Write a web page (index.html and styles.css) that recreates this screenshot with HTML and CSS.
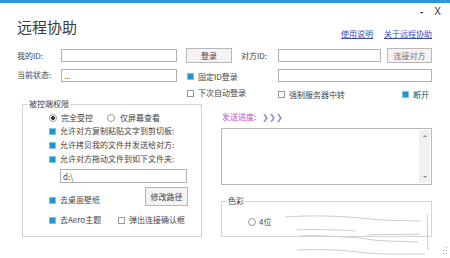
FILE: index.html
```html
<!DOCTYPE html>
<html lang="zh-CN">
<head>
    <meta charset="UTF-8">
    <meta name="viewport" content="width=device-width, initial-scale=1.0">
    <title>远程协助</title>
    <link rel="stylesheet" href="styles.css">
</head>
<body>
    <div class="window">
        <div class="topbar"></div>

        <div class="header">
            <h1 class="title">远程协助</h1>
            <div class="header-right">
                <div class="controls"><span class="min">-</span><span class="close">X</span></div>
                <div class="links">
                    <a href="#">使用说明</a>
                    <a href="#">关于远程协助</a>
                </div>
            </div>
        </div>

        <!-- fila de IDs -->
        <div class="row row1">
            <label class="lbl" for="miId">我的ID:</label>
            <input class="field f-my" type="text" id="miId">
            <button class="btn btn-login">登录</button>
            <label class="lbl lbl-peer" for="peerId">对方ID:</label>
            <input class="field f-peer" type="text" id="peerId">
            <button class="btn btn-connect">连接对方</button>
        </div>

        <div class="row row2">
            <label class="lbl" for="estado">当前状态:</label>
            <input class="field f-my" type="text" id="estado" value="...">
            <div class="item item-fixed"><span class="check on"></span><span>固定ID登录</span></div>
            <input class="field f-wide" type="text">
        </div>

        <div class="row row3">
            <div class="item w-auto"><span class="check"></span><span>下次自动登录</span></div>
            <div class="item w-relay"><span class="check"></span><span>强制服务器中转</span></div>
            <div class="item"><span class="check on"></span><span>断开</span></div>
        </div>

        <div class="main">
            <fieldset class="group perm">
                <legend>被控端权限</legend>
                <div class="inner">
                    <div class="radios">
                        <div class="item"><span class="radio on"></span><span>完全受控</span></div>
                        <div class="item radio-2"><span class="radio"></span><span>仅屏幕查看</span></div>
                    </div>
                    <div class="item line"><span class="check on"></span><span>允许对方复制粘贴文字到剪切板:</span></div>
                    <div class="item line"><span class="check on"></span><span>允许拷贝我的文件并发送给对方:</span></div>
                    <div class="item line"><span class="check on"></span><span>允许对方拖动文件到如下文件夹:</span></div>
                    <input class="field f-path" type="text" value="d:\">
                    <div class="tools-a">
                        <div class="item"><span class="check on"></span><span>去桌面壁纸</span></div>
                        <button class="btn btn-path">修改路径</button>
                    </div>
                    <div class="tools-b">
                        <div class="item w-aero"><span class="check on"></span><span>去Aero主题</span></div>
                        <div class="item"><span class="check"></span><span>弹出连接确认框</span></div>
                    </div>
                </div>
            </fieldset>

            <div class="side">
                <div class="progress">发送进度:<span class="arrows">❯❯❯</span></div>
                <div class="log">
                    <div class="log-text"></div>
                    <div class="scroll">
                        <span class="arr up"></span>
                        <span class="arr down"></span>
                    </div>
                </div>
                <fieldset class="group colors">
                    <legend>色彩</legend>
                    <div class="inner">
                        <div class="item"><span class="radio"></span><span>4位</span></div>
                    </div>
                </fieldset>
            </div>
        </div>

        <div class="footer">
            <svg width="6" height="8" viewBox="0 0 6 8">
                <rect x="4" y="0" width="1" height="1" fill="#999"/>
                <rect x="4" y="3" width="1" height="1" fill="#999"/>
                <rect x="1" y="3" width="1" height="1" fill="#999"/>
                <rect x="4" y="6" width="1" height="1" fill="#999"/>
                <rect x="1" y="6" width="1" height="1" fill="#999"/>
            </svg>
        </div>

        <!-- restos de marca de agua -->
        <svg class="smudge" width="450" height="258" viewBox="0 0 450 258">
            <g fill="none" stroke="#cdcdcd" stroke-width="1">
                <path d="M285 217 C310 215 340 216 360 218 C380 221 400 220 420 221"/>
                <path d="M297 230 C315 229 340 230 356 231"/>
                <path d="M367 235 C385 234 405 235 420 234"/>
                <path d="M300 236 C320 235 345 237 360 238 C380 242 400 241 418 242"/>
                <path d="M297 250 C320 249 345 250 358 252 C380 255 405 254 425 254"/>
                <path d="M427 214 C428 225 427 238 428 250"/>
            </g>
        </svg>
    </div>
</body>
</html>
```

FILE: styles.css
```css
*{
    box-sizing: border-box;
}
body{
    margin: 0;
    width: 450px;
    height: 258px;
    overflow: hidden;
    background: #fff;
    font-family: "Noto Sans CJK SC", "Liberation Sans", sans-serif;
    font-size: 8px;
    line-height: 10px;
    color: #444;
}
.window{
    position: relative;
    height: 258px;
}
.topbar{
    height: 3px;
    background: #2a9ad6;
}
.header{
    display: flex;
    justify-content: space-between;
    height: 45px;
}
.title{
    margin: 16px 0 0 17px;
    font-size: 15px;
    line-height: 15px;
    font-weight: normal;
    color: #3a3a3a;
}
.header-right{
    display: flex;
    flex-direction: column;
    align-items: flex-end;
}
.controls{
    display: flex;
    gap: 11px;
    margin-top: 3px;
    padding-right: 9px;
    font-family: "Liberation Sans", sans-serif;
    font-size: 10px;
    line-height: 12px;
    color: #333;
}
.min{
    font-weight: bold;
}
.links{
    display: flex;
    gap: 11px;
    margin-top: 11px;
    margin-right: 18px;
}
.links a{
    color: #3a4cb4;
    text-decoration: underline;
}

/* filas de arriba */
.row{
    display: flex;
    align-items: center;
    padding-left: 17px;
}
.row1{
    height: 15px;
}
.row2{
    height: 14px;
    margin-top: 5px;
}
.row3{
    height: 10px;
    margin-top: 6px;
    padding-left: 187px;
}
.lbl{
    width: 44px;
    flex: none;
}
.lbl-peer{
    width: 37px;
    margin-left: 9px;
}
.field{
    height: 13px;
    border: 1px solid #b0b0b0;
    padding: 0 2px;
    font-family: inherit;
    font-size: 8px;
    color: #444;
    background: #fff;
    outline: none;
}
.f-my{
    width: 116px;
}
.f-peer{
    width: 103px;
}
.f-wide{
    width: 154px;
}
.btn{
    height: 15px;
    padding: 0;
    border: 1px solid #b8b8b8;
    background: #f3f3f3;
    font-family: inherit;
    font-size: 8px;
    color: #444;
}
.btn-login{
    width: 46px;
    margin-left: 9px;
}
.btn-connect{
    width: 45px;
    margin-left: 6px;
    color: #777;
}
.item{
    display: flex;
    align-items: center;
    gap: 4px;
    height: 10px;
    flex: none;
}
.item-fixed{
    width: 91px;
    margin-left: 10px;
    margin-top: 3px;
}
.w-auto{
    width: 91px;
}
.w-relay{
    width: 124px;
    margin-top: 3px;
}
.row3 .item:last-child{
    margin-top: 3px;
}
.check{
    width: 7px;
    height: 7px;
    flex: none;
    border: 1px solid #999;
    background: #fff;
}
.check.on{
    border-color: #7cc3ea;
    background: #2192d2;
}
.radio{
    width: 8px;
    height: 8px;
    flex: none;
    border: 1px solid #999;
    border-radius: 50%;
    background: #fff;
}
.radio.on{
    background: radial-gradient(circle, #333 0 1.6px, #fff 2.2px);
}

/* parte principal */
.main{
    display: flex;
    margin-top: 1px;
    padding-left: 22px;
}
.group{
    margin: 0;
    min-width: 0;
    border: 1px solid #d4d4d4;
    padding: 0 13px 0 5px;
}
.group legend{
    padding: 0 1px;
    font-size: 8px;
    line-height: 10px;
    color: #444;
}
.perm{
    width: 180px;
    height: 138px;
}
.perm .inner{
    padding-top: 3px;
    padding-left: 21px;
}
.radios{
    display: flex;
    height: 12px;
    align-items: center;
}
.radio-2{
    margin-left: 14px;
    gap: 5px;
}
.line{
    height: 14px;
}
.f-path{
    display: block;
    width: 127px;
    height: 14px;
    margin: 3px 0 0 11px;
}
.tools-a{
    display: flex;
    justify-content: space-between;
    align-items: flex-end;
    margin-top: 4px;
    height: 19px;
}
.btn-path{
    width: 43px;
    height: 19px;
}
.tools-a .item{
    margin-bottom: 1px;
}
.tools-b{
    display: flex;
    margin-top: 9px;
}
.w-aero{
    width: 69px;
}
.side{
    width: 211px;
    margin-left: 19px;
}
.progress{
    margin-top: 13px;
    padding-left: 1px;
    color: #c94cc6;
}
.arrows{
    margin-left: 6px;
    color: #8e8bcb;
}
.log{
    display: flex;
    height: 57px;
    margin-top: 6px;
    border: 1px solid #b8b8b8;
}
.log-text{
    flex: 1;
}
.scroll{
    width: 11px;
    margin: 1px 1px 1px 0;
    background: #f0f0f0;
    display: flex;
    flex-direction: column;
    justify-content: space-between;
    align-items: center;
    padding: 5px 0;
}
.arr{
    width: 0;
    height: 0;
    border-left: 2px solid transparent;
    border-right: 2px solid transparent;
}
.arr.up{
    border-bottom: 2px solid #888;
}
.arr.down{
    border-top: 2px solid #888;
}
.colors{
    width: 211px;
    height: 41px;
    margin-top: 11px;
}
.colors .inner{
    padding-top: 11px;
    padding-left: 21px;
}
.colors .item{
    gap: 3px;
}
.footer{
    display: flex;
    justify-content: flex-end;
    margin-top: 10px;
    padding-right: 2px;
}
.smudge{
    position: absolute;
    left: 0;
    top: 0;
    pointer-events: none;
}
```
